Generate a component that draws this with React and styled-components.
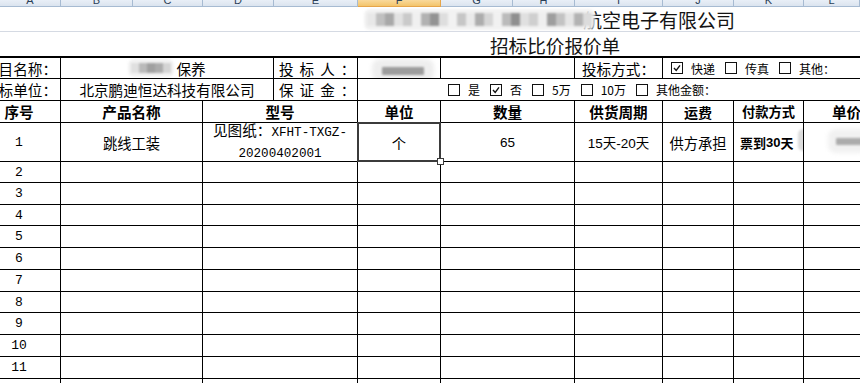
import React from "react";
import styled, { createGlobalStyle } from "styled-components";

const GlobalStyle = createGlobalStyle`
  html, body {
    margin: 0;
    padding: 0;
    background: #fff;
    overflow: hidden;
  }
  body {
    font-family: "Noto Sans CJK SC", "Liberation Sans", sans-serif;
    color: #000;
  }
`;

const COLS = [60, 71, 69, 70, 83, 82, 71, 61, 87, 70, 69, 56];
const LETTERS = "ABCDEFGHIJKL".split("");
const ROWS = [20, 21, 21, 38, 20, 21, 20, 21, 21, 21, 20, 21, 21, 21, 30];

const Sheet = styled.div`
  width: 860px;
  height: 383px;
  overflow: hidden;
`;

const ColumnBar = styled.div`
  display: flex;
  height: 7px;
  overflow: hidden;
`;

const ColumnHead = styled.div`
  box-sizing: border-box;
  flex: none;
  width: ${(p) => p.$w}px;
  height: 7px;
  background: ${(p) =>
    p.$active
      ? "linear-gradient(#f9d99c, #f3c46b)"
      : "linear-gradient(#e9eff7, #dbe4ef)"};
  border-right: 1px solid ${(p) => (p.$active ? "#e6a54a" : "#a7bbd2")};
  border-bottom: 1px solid ${(p) => (p.$active ? "#e6a54a" : "#a7bbd2")};
  text-align: center;
  font-family: "Liberation Sans", sans-serif;
  font-size: 11px;
  color: #2b3f57;

  span {
    display: block;
    line-height: 14px;
    margin-top: -7px;
  }
`;

const TitleLine = styled.div`
  box-sizing: border-box;
  display: flex;
  align-items: center;
  height: ${(p) => p.$h}px;
  padding-left: ${(p) => p.$pl}px;
  font-size: ${(p) => p.$size}px;
  color: #141414;
  white-space: nowrap;
  border-bottom: ${(p) => (p.$rule ? "1px solid #d5dae3" : "none")};
`;

const Grid = styled.div`
  display: grid;
  width: 860px;
  grid-template-columns: ${COLS.map((w) => `${w}px`).join(" ")};
  grid-template-rows: ${ROWS.map((h) => `${h}px`).join(" ")};
  gap: 1px;
  background: #000;
  border-top: 2px solid #000;
`;

const Cell = styled.div`
  position: relative;
  display: flex;
  flex-direction: ${(p) => (p.$stack ? "column" : "row")};
  align-items: center;
  justify-content: ${(p) =>
    p.$stack ? "center" : p.$align === "right" ? "flex-end" : p.$align === "left" ? "flex-start" : "center"};
  grid-column: span ${(p) => p.$span || 1};
  min-width: 0;
  padding: 0 ${(p) => p.$pr || 0}px 0 ${(p) => p.$pl || 0}px;
  background: #fff;
  overflow: ${(p) => (p.$selected ? "visible" : "hidden")};
  white-space: nowrap;
  font-size: ${(p) => p.$size || 14.6}px;
  font-weight: ${(p) => (p.$bold ? 700 : 400)};
  z-index: ${(p) => (p.$selected ? 2 : "auto")};

  ${(p) =>
    p.$selected &&
    `
    &::after {
      content: "";
      position: absolute;
      inset: -1px;
      border: 2px solid #3b3b3b;
      pointer-events: none;
    }
    &::before {
      content: "";
      position: absolute;
      right: -4px;
      bottom: -4px;
      width: 5px;
      height: 5px;
      background: #fff;
      border: 1px solid #3b3b3b;
      z-index: 3;
    }
  `}
`;

const Label = styled.span`
  flex: none;
  letter-spacing: ${(p) => p.$spacing || 0}px;
`;

const Mono = styled.span`
  font-family: "Liberation Mono", "Noto Sans CJK SC", monospace;
  font-size: ${(p) => p.$size || 12.6}px;
`;

const Num = styled.span`
  font-family: "Liberation Sans", "Noto Sans CJK SC", sans-serif;
  font-size: ${(p) => p.$size || 13.5}px;
`;

const TwoLine = styled.span`
  line-height: 17px;
  text-align: center;
  font-size: 14.6px;
`;

const Choices = styled.div`
  display: flex;
  align-items: center;
  gap: 10px;
  font-size: 12px;
`;

const Choice = styled.span`
  display: inline-flex;
  align-items: center;
  gap: 8px;
`;

const Box = styled.span`
  box-sizing: border-box;
  display: inline-flex;
  align-items: center;
  justify-content: center;
  width: 12px;
  height: 12px;
  border: 1px solid #111;
  background: #fff;
`;

const MosaicWrap = styled.span`
  position: relative;
  z-index: 1;
  display: inline-flex;
  align-items: center;
  flex: none;
  height: ${(p) => p.$h + 8}px;
  margin-right: ${(p) => p.$mr || 0}px;
  padding: 0 3px;
  background: rgba(240, 240, 240, 0.85);
  border-radius: 6px;
  filter: blur(1.1px);
`;

const Tile = styled.span`
  display: block;
  width: ${(p) => p.$w}px;
  height: ${(p) => p.$h}px;
  background: ${(p) => p.$c};
`;

const Smudge = styled.span`
  position: absolute;
  left: ${(p) => p.$x}px;
  top: ${(p) => p.$y}px;
  width: ${(p) => p.$w}px;
  height: ${(p) => p.$h}px;
  background: ${(p) => p.$c};
  border-radius: ${(p) => p.$r || 3}px;
  filter: blur(${(p) => p.$blur || 1.5}px);
`;

const Mosaic = ({ tiles, w = 9, h = 14, mr }) => (
  <MosaicWrap $h={h} $mr={mr}>
    {tiles.map((c, i) => (
      <Tile key={i} $c={c} $w={w} $h={h} />
    ))}
  </MosaicWrap>
);

const Check = ({ on }) => (
  <Box>
    {on && (
      <svg width="8" height="8" viewBox="0 0 8 8">
        <polyline points="1,4 3.2,6.4 7,1.4" fill="none" stroke="#111" strokeWidth="1.4" />
      </svg>
    )}
  </Box>
);

const titleTiles = [
  "#e8e8e8", "#c0c0c0", "#a8a8a8", "#e2e2e2", "#cacaca", "#f0f0f0", "#b2b2b2",
  "#939393", "#dedede", "#f2f2f2", "#c6c6c6", "#eaeaea", "#adadad", "#d6d6d6",
  "#f1f1f1", "#bbbbbb", "#8f8f8f", "#e0e0e0", "#cfcfcf", "#efefef", "#9e9e9e",
  "#c3c3c3", "#e5e5e5", "#b3b3b3", "#dcdcdc",
];

const nameTiles = ["#e0e0e0", "#bababa", "#a0a0a0", "#acacac", "#d4d4d4"];

const DataRow = ({ n }) => (
  <>
    <Cell $pr={22}>
      <Mono $size={13}>{n}</Mono>
    </Cell>
    <Cell $span={2} />
    <Cell $span={2} />
    <Cell />
    <Cell $span={2} />
    <Cell />
    <Cell />
    <Cell />
    <Cell />
  </>
);

export default function App() {
  const rest = [2, 3, 4, 5, 6, 7, 8, 9, 10, 11, ""];
  return (
    <Sheet>
      <GlobalStyle />
      <ColumnBar>
        {COLS.map((w, i) => (
          <ColumnHead key={i} $w={i < COLS.length - 1 ? w + 1 : w} $active={i === 5}>
            <span>{LETTERS[i]}</span>
          </ColumnHead>
        ))}
      </ColumnBar>

      <TitleLine $h={25} $pl={364} $size={19} $rule>
        <Mosaic tiles={titleTiles} w={9} h={13} mr={-12} />
        航空电子有限公司
      </TitleLine>
      <TitleLine $h={24} $pl={490} $size={18.6}>
        招标比价报价单
      </TitleLine>

      <Grid>
        {/* 项目名称 / 投标人 / 投标方式 */}
        <Cell $align="right" $pr={3}>
          <Label>项目名称：</Label>
        </Cell>
        <Cell $span={3}>
          <Mosaic tiles={nameTiles} w={8} h={10} mr={2} />
          <Label>保养</Label>
        </Cell>
        <Cell $align="left" $pl={5}>
          <Label $spacing={6}>投标人：</Label>
        </Cell>
        <Cell>
          <Smudge $x={14} $y={1} $w={62} $h={22} $c="#eeeeee" $r={8} $blur={2} />
          <Smudge $x={24} $y={9} $w={42} $h={8} $c="#9c9c9c" $r={1} $blur={1} />
        </Cell>
        <Cell $span={2} />
        <Cell $align="left" $pl={7}>
          <Label>投标方式：</Label>
        </Cell>
        <Cell $span={3} $align="left" $pl={8}>
          <Choices>
            <Choice><Check on />快递</Choice>
            <Choice><Check />传真</Choice>
            <Choice><Check />其他：</Choice>
          </Choices>
        </Cell>

        {/* 投标单位 / 保证金 */}
        <Cell $align="right" $pr={3}>
          <Label>投标单位：</Label>
        </Cell>
        <Cell $span={3}>
          <Label>北京鹏迪恒达科技有限公司</Label>
        </Cell>
        <Cell $align="left" $pl={5}>
          <Label $spacing={6}>保证金：</Label>
        </Cell>
        <Cell $span={7} $align="left" $pl={90}>
          <Choices>
            <Choice><Check />是</Choice>
            <Choice><Check on />否</Choice>
            <Choice><Check />5万</Choice>
            <Choice><Check />10万</Choice>
            <Choice><Check />其他金额：</Choice>
          </Choices>
        </Cell>

        {/* column titles */}
        <Cell $bold $pr={22}>序号</Cell>
        <Cell $bold $span={2}>产品名称</Cell>
        <Cell $bold $span={2}>型号</Cell>
        <Cell $bold>单位</Cell>
        <Cell $bold $span={2}>数量</Cell>
        <Cell $bold>供货周期</Cell>
        <Cell $bold $size={14}>运费</Cell>
        <Cell $bold $size={13.3}>付款方式</Cell>
        <Cell $bold $align="left" $pl={28}>单价</Cell>

        {/* first item */}
        <Cell $pr={22}>
          <Mono $size={13}>1</Mono>
        </Cell>
        <Cell $span={2} $size={14.3}>跳线工装</Cell>
        <Cell $span={2} $stack>
          <TwoLine>
            见图纸：<Mono>XFHT-TXGZ-</Mono>
          </TwoLine>
          <TwoLine>
            <Mono>20200402001</Mono>
          </TwoLine>
        </Cell>
        <Cell $selected $size={14.3}>个</Cell>
        <Cell $span={2}>
          <Num>65</Num>
        </Cell>
        <Cell>
          <Num>15天-20天</Num>
        </Cell>
        <Cell $size={14.3}>供方承担</Cell>
        <Cell $align="left" $pl={6} $bold $size={13}>
          票到<Num $size={13}>30</Num>天
          <Smudge $x={64} $y={6} $w={10} $h={22} $c="#dcdcdc" $r={6} $blur={1.2} />
        </Cell>
        <Cell>
          <Smudge $x={24} $y={6} $w={40} $h={24} $c="#f1f1f1" $r={8} $blur={2} />
          <Smudge $x={32} $y={15} $w={30} $h={7} $c="#acacac" $r={1} $blur={1} />
        </Cell>

        {rest.map((n, i) => (
          <DataRow key={i} n={n} />
        ))}
      </Grid>
    </Sheet>
  );
}
